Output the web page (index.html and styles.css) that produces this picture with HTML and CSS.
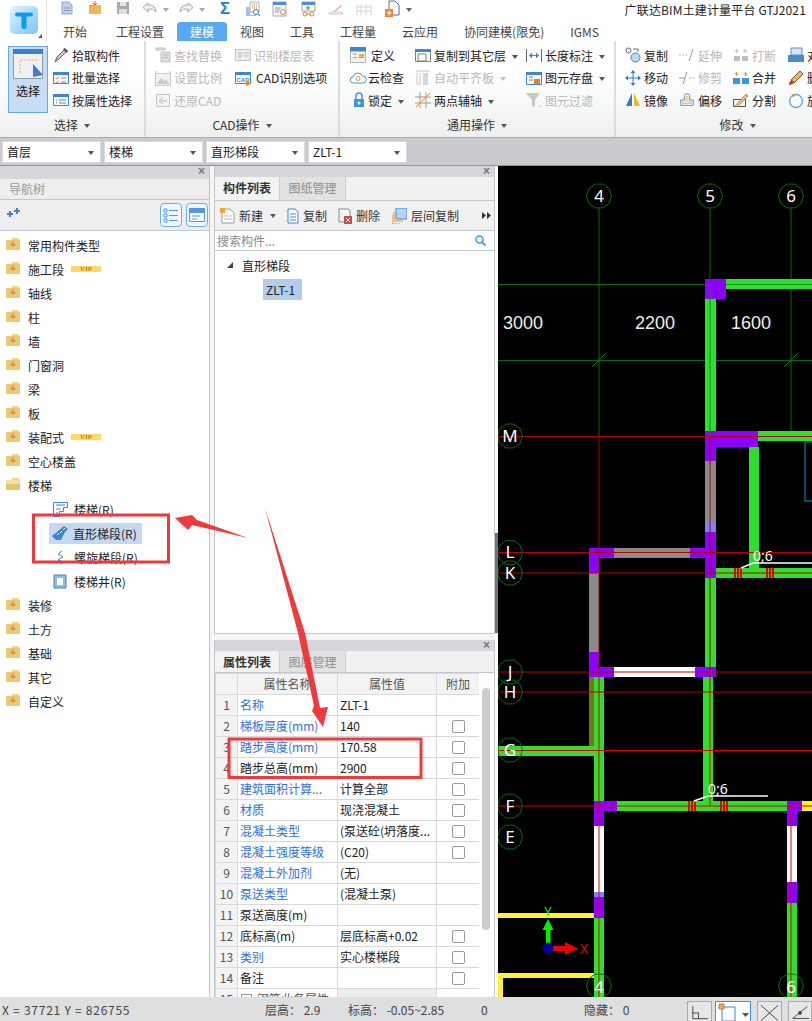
FILE: index.html
```html
<!DOCTYPE html>
<html lang="zh">
<head>
<meta charset="utf-8">
<title>广联达BIM土建计量平台 GTJ2021</title>
<link rel="stylesheet" href="styles.css">
</head>
<body>
<div class="app">

<header class="top">
  <div class="logo">
    <div class="logo-tile"><svg viewBox="0 0 28 28" width="28" height="28"><path d="M5 8.500q0-2 2-2h14q2 0 2 2t-2 2h-4.500v10q0 2.500-2.500 2.500t-2.500-2.500v-10H7q-2 0-2-2z" fill="#0a9bf0"/></svg></div>
    <span class="logo-corner"></span>
  </div>
  <div class="top-main">
    <div class="quick">
      <svg class="q q-new" viewBox="0 0 14 14" width="14" height="14"><path d="M2 1h7l3 3v9H2z" fill="#c3d0e8" stroke="#8fa6cf"/><path d="M4 7h6M4 9.500h6" stroke="#7d95c4"/></svg>
      <svg class="q q-open" viewBox="0 0 14 14" width="14" height="14"><path d="M1 4h12v9H1z" fill="#f5b25e"/><path d="M7 0v4M5 2l2 2 2-2" stroke="#e05a1c" fill="none"/><path d="M1 4h4l1 1H1z" fill="#e99a3a"/></svg>
      <svg class="q q-save" viewBox="0 0 14 14" width="14" height="14"><path d="M1 1h12v12H1z" fill="#a9a9a9"/><path d="M4 1h6v4H4z" fill="#e6e6e6"/><path d="M3 8h8v5H3z" fill="#dedede"/></svg>
      <svg class="q q-undo" viewBox="0 0 16 14" width="16" height="14"><path d="M6 2L1 6.500 6 11V8q5-1 8 3 0-7-8-7z" fill="#f2f2f2" stroke="#a4a4a4"/></svg>
      <span class="q q-dd1"></span>
      <svg class="q q-redo" viewBox="0 0 16 14" width="16" height="14"><path d="M10 2l5 4.500L10 11V8q-5-1-8 3 0-7 8-7z" fill="#f2f2f2" stroke="#a4a4a4"/></svg>
      <span class="q q-dd2"></span>
      <span class="q q-sum">Σ</span>
      <svg class="q q-a" viewBox="0 0 16 16" width="16" height="16"><path d="M5 1h9v10H5z" fill="#fff" stroke="#9db5d6"/><path d="M7 3h5M7 5h5M7 7h5" stroke="#d9893a" stroke-dasharray="1 1"/><path d="M1 6h4v8h6v1H1z" fill="#9cc3ea"/><circle cx="11" cy="11" r="2.500" fill="#fff" stroke="#2c78c8"/><path d="M13 13l2 2" stroke="#2c78c8"/></svg>
      <svg class="q q-b" viewBox="0 0 16 16" width="16" height="16"><path d="M1 1h13v14H1z" fill="#f7f7f7" stroke="#a9a9a9"/><path d="M1 1h13v3H1z" fill="#4a8fd8"/><path d="M3 7h6M3 9h5M3 11h4" stroke="#999"/><circle cx="11" cy="11" r="2.500" fill="#fff" stroke="#d68a2e"/></svg>
      <svg class="q q-c" viewBox="0 0 16 16" width="16" height="16"><path d="M1 1h13v9H1z" fill="#f7f7f7" stroke="#a9a9a9"/><path d="M1 1h13v3H1z" fill="#4a8fd8"/><path d="M7 5v4M5 7h4" stroke="#4d8f3c"/><circle cx="4" cy="13" r="2" fill="none" stroke="#d68a2e"/><circle cx="11" cy="13" r="2" fill="none" stroke="#d68a2e"/><path d="M6 13h3" stroke="#d68a2e"/></svg>
      <svg class="q q-d" viewBox="0 0 16 14" width="16" height="14"><path d="M1 11q5-3 14 0v1H1z" fill="#ededed" stroke="#cfcfcf"/><path d="M6 9l7-6 1 1-7 6z" fill="#e9a98d"/></svg>
      <svg class="q q-e" viewBox="0 0 16 14" width="16" height="14"><path d="M1 2v11M5 2v11M10 2v11M15 2v11M1 5h14M1 9h14" stroke="#d4d4d4"/></svg>
      <svg class="q q-f" viewBox="0 0 16 18" width="16" height="18"><path d="M5 1h6l4 4v10H5z" fill="#fff" stroke="#5c6f86"/><path d="M1 9h8v8H1z" fill="#e8892f"/><path d="M5 10.500v5M2.500 13h5" stroke="#fff"/></svg>
      <span class="q q-more"></span>
      <span class="app-title">广联达BIM土建计量平台 GTJ2021</span>
    </div>
    <nav class="tabs">
      <span class="tab tab-first">开始</span>
      <span class="tab">工程设置</span>
      <span class="tab tab-on">建模</span>
      <span class="tab">视图</span>
      <span class="tab">工具</span>
      <span class="tab">工程量</span>
      <span class="tab">云应用</span>
      <span class="tab">协同建模(限免)</span>
      <span class="tab">IGMS</span>
    </nav>
  </div>
</header>

<section class="ribbon">
  <div class="group g1">
    <div class="rows">
      <div class="big">
        <svg viewBox="0 0 30 30" width="30" height="30"><path d="M.5.500h29v29H.5z" fill="#eef2f8" stroke="#8a9bb5"/><path d="M0 0h30v5H0z" fill="#3f7fc8"/><path d="M7 24V11h19" fill="none" stroke="#f5a623" stroke-dasharray="2 1.500"/><path d="M20 15v13l10-2z" fill="#3f7fc8"/></svg>
        <span>选择</span>
      </div>
      <div class="it">
        <svg class="ic" viewBox="0 0 16 16"><path d="M2 15l2-5 7-7 2 2-7 7z" fill="#c8c8c8" stroke="#666"/><path d="M10 2l2-1 3 3-1 2z" fill="#555"/><path d="M2 15l2-4 1 1z" fill="#d97b2a"/></svg>
        <span>拾取构件</span>
      </div>
      <div class="it it-r2">
        <svg class="ic" viewBox="0 0 16 16"><path d="M.5 2.500h15v11H.5z" fill="#fff" stroke="#3f86d0"/><path d="M0 2h16v3H0z" fill="#3f86d0"/><path d="M3 8l1 1 2-2M3 12l1 1 2-2" stroke="#ee8a22" fill="none"/><path d="M8 8h5M8 12h5" stroke="#888"/></svg>
        <span>批量选择</span>
      </div>
      <div class="it it-r3">
        <svg class="ic" viewBox="0 0 16 16"><path d="M.5 2.500h15v11H.5z" fill="#fff" stroke="#3f86d0"/><path d="M0 2h16v3H0z" fill="#3f86d0"/><path d="M3 8h1M3 11h1M6 8h7M6 11h7" stroke="#3f86d0"/></svg>
        <span>按属性选择</span>
      </div>
    </div>
    <div class="glabel">选择<i class="dd"></i></div>
  </div>

  <div class="group g2">
    <div class="rows">
      <div class="it off">
        <svg class="ic" viewBox="0 0 16 16"><path d="M1 1h9v2H1zM6 5h9v10H6z" fill="#ddd" stroke="#c2c2c2"/><path d="M8 8h5M8 10.500h5" stroke="#bbb"/></svg>
        <span>查找替换</span>
      </div>
      <div class="it off">
        <svg class="ic" viewBox="0 0 16 16"><path d="M.5 2.500h15v11H.5z" fill="#eee" stroke="#c4c4c4"/><path d="M3 5h4v6H3z" fill="#d4d4d4"/><path d="M9 6h5M9 9h5" stroke="#bbb"/></svg>
        <span>识别楼层表</span>
      </div>
      <div class="it off">
        <svg class="ic" viewBox="0 0 16 16"><path d="M.5 3.500h15v12H.5z" fill="#f1f1f1" stroke="#ccc"/><path d="M2 14l4-6 3 3 2-2 3 5z" fill="#ccc"/><path d="M1 1v3M15 1v3" stroke="#bbb"/></svg>
        <span>设置比例</span>
      </div>
      <div class="it it-cad">
        <svg class="ic" viewBox="0 0 16 16"><path d="M.5 2.500h15v11H.5z" fill="#fff" stroke="#3f86d0"/><path d="M0 2h16v3H0z" fill="#3f86d0"/><text x="8" y="12" class="ic-cad">CAD</text><path d="M11 9v7l5-2z" fill="#ee8a22"/></svg>
        <span>CAD识别选项</span>
      </div>
      <div class="it off">
        <svg class="ic" viewBox="0 0 16 16"><path d="M1.500 2.500h13v12h-13z" fill="#f4f4f4" stroke="#c4c4c4"/><path d="M8 5L4 9l4 3M4 9h8" stroke="#bdbdbd" fill="none"/></svg>
        <span>还原CAD</span>
      </div>
    </div>
    <div class="glabel">CAD操作<i class="dd"></i></div>
  </div>

  <div class="group g3">
    <div class="rows">
      <div class="it it-wide">
        <svg class="ic ic-l" viewBox="0 0 18 18"><path d="M.5 .500h17v17H.5z" fill="#f3f3f3" stroke="#aaa"/><path d="M0 0h18v5H0z" fill="#3f86d0"/><path d="M3 8h5M3 12h5" stroke="#999"/><path d="M10 8h6v3h-6z" fill="#f4a42c"/><path d="M10 12h6" stroke="#999"/></svg>
        <span>定义</span>
      </div>
      <div class="it">
        <svg class="ic" viewBox="0 0 16 16"><path d="M.5 2.500h15v12H.5z" fill="#fff" stroke="#7a7f85"/><path d="M0 2h16v3H0z" fill="#3f86d0"/><path d="M3 7h8v7H3z" fill="#fff" stroke="#7a7f85"/></svg>
        <span>复制到其它层<i class="dd"></i></span>
      </div>
      <div class="it">
        <svg class="ic" viewBox="0 0 16 16"><path d="M.5 2v13M15.500 2v13" stroke="#666"/><path d="M3 8.500h10" stroke="#3f86d0"/><path d="M3 8.500l3-3v6zM13 8.500l-3-3v6z" fill="#3f86d0"/></svg>
        <span>长度标注<i class="dd"></i></span>
      </div>
      <div class="it it-c1">
        <svg class="ic ic-l" viewBox="0 0 18 16"><path d="M4.500 13a3 3 0 0 1-.5-6 5 5 0 0 1 9.500-1A3.500 3.500 0 0 1 14 13z" fill="#fff" stroke="#3f96e0"/><circle cx="9" cy="8.500" r="2" fill="none" stroke="#ee8a22"/></svg>
        <span>云检查</span>
      </div>
      <div class="it off">
        <svg class="ic" viewBox="0 0 16 16"><path d="M1 1h14M2 3v11M5 3v11M2 14h3" stroke="#c4c4c4" fill="none"/><path d="M8 3h5v12H8z" fill="#d6d6d6"/></svg>
        <span>自动平齐板<i class="dd dd-off"></i></span>
      </div>
      <div class="it">
        <svg class="ic" viewBox="0 0 16 16"><path d="M.5 2.500h15v12H.5z" fill="#fff" stroke="#3f86d0"/><path d="M0 2h16v3H0z" fill="#3f86d0"/><path d="M3 7h4M3 10h4" stroke="#777"/><path d="M8 9h6v5H8z" fill="#ee7d1f"/></svg>
        <span>图元存盘<i class="dd"></i></span>
      </div>
      <div class="it it-c1">
        <svg class="ic ic-lock" viewBox="0 0 12 16"><path d="M3 7V4a3 3 0 0 1 6 0v3" fill="none" stroke="#3f96e0" stroke-width="1.500"/><path d="M1 7h10v8H1z" fill="#3f96e0"/><circle cx="6" cy="11" r="1.500" fill="#fff"/></svg>
        <span>锁定<i class="dd"></i></span>
      </div>
      <div class="it">
        <svg class="ic" viewBox="0 0 16 16"><path d="M5 0v16M11 0v16M0 5h16M0 11h16" stroke="#888" stroke-width=".8"/><path d="M1 15L15 1" stroke="#ee8a22"/></svg>
        <span>两点辅轴<i class="dd"></i></span>
      </div>
      <div class="it off">
        <svg class="ic" viewBox="0 0 16 16"><path d="M0 1h14L9 8v7l-3-1V8z" fill="#c8c8c8"/><path d="M12 14h3" stroke="#c8c8c8"/></svg>
        <span>图元过滤</span>
      </div>
    </div>
    <div class="glabel">通用操作<i class="dd"></i></div>
  </div>

  <div class="group g4">
    <div class="rows">
      <div class="it">
        <svg class="ic" viewBox="0 0 16 16"><circle cx="3.500" cy="3.500" r="2.500" fill="#fff" stroke="#666"/><circle cx="10.500" cy="10.500" r="4.500" fill="#bcd7f2" stroke="#3f86d0"/><path d="M8 2h5v3" fill="none" stroke="#666"/></svg>
        <span>复制</span>
      </div>
      <div class="it off">
        <svg class="ic" viewBox="0 0 16 16"><path d="M0 8h9" stroke="#bbb" stroke-dasharray="2 1"/><path d="M10 14l4-12" stroke="#999"/></svg>
        <span>延伸</span>
      </div>
      <div class="it off">
        <svg class="ic" viewBox="0 0 16 16"><path d="M1 9h6v5H1zM9 9h6v5H9z" fill="#bdbdbd"/><path d="M3.500 2v4M1.500 4h4M12 2v4M10 4h4" stroke="#bdbdbd"/></svg>
        <span>打断</span>
      </div>
      <div class="it it-clip">
        <svg class="ic" viewBox="0 0 16 16"><path d="M3 1h11v7H3z" fill="#d7e4f4" stroke="#5d90c8"/><path d="M0 8h16v7H0z" fill="#4a8ad0"/></svg>
        <span>对齐</span>
      </div>
      <div class="it">
        <svg class="ic" viewBox="0 0 16 16"><path d="M8 0l2.500 3h-5zM8 16l2.500-3h-5zM0 8l3-2.500v5zM16 8l-3-2.500v5z" fill="#2a7cd0"/><path d="M8 3v10M3 8h10" stroke="#2a7cd0"/></svg>
        <span>移动</span>
      </div>
      <div class="it off">
        <svg class="ic" viewBox="0 0 16 16"><path d="M0 8h6" stroke="#999"/><path d="M10 8h6" stroke="#bbb" stroke-dasharray="2 1"/><path d="M4 14l4-12" stroke="#999"/></svg>
        <span>修剪</span>
      </div>
      <div class="it">
        <svg class="ic" viewBox="0 0 16 16"><path d="M0 8h7v6H0zM9 8h7v6H9z" fill="#3f96e0"/><path d="M3.500 2v4M1.500 4h4M12.500 2v4M10.500 4h4" stroke="#ee8a22"/></svg>
        <span>合并</span>
      </div>
      <div class="it it-clip">
        <svg class="ic" viewBox="0 0 16 16"><path d="M3 10l9-9 3 3-9 9z" fill="#e4b57a" stroke="#7a5a2a"/><path d="M1 15q0-4 3-5l2 2q-1 3-5 3z" fill="#b0451f"/></svg>
        <span>删除</span>
      </div>
      <div class="it">
        <svg class="ic" viewBox="0 0 16 16"><path d="M7 1v13H1z" fill="#2a7cd0"/><path d="M9 1v13h6z" fill="#f5b02e"/></svg>
        <span>镜像</span>
      </div>
      <div class="it">
        <svg class="ic" viewBox="0 0 18 16"><path d="M2 14V8h4V3q0-2 3-2t3 2v5h4v6z" fill="#fff" stroke="#3f86d0"/><path d="M4 12V10h4V4h2v6h4v2z" fill="none" stroke="#f5b02e"/></svg>
        <span>偏移</span>
      </div>
      <div class="it">
        <svg class="ic" viewBox="0 0 16 16"><path d="M.5 7.500h12v7H.5z" fill="none" stroke="#555"/><path d="M2 14L13 2l2 2L4 15z" fill="#f0c27a" stroke="#7a5a2a" stroke-width=".6"/></svg>
        <span>分割</span>
      </div>
      <div class="it it-clip">
        <svg class="ic" viewBox="0 0 16 16"><circle cx="8" cy="9" r="6.500" fill="none" stroke="#5aa6e6" stroke-width="1.300"/><path d="M4 2l4 .500-3 3z" fill="#ee8a22"/></svg>
        <span>旋转</span>
      </div>
    </div>
    <div class="glabel">修改<i class="dd"></i></div>
  </div>
</section>

<section class="selbar">
  <div class="sel">首层</div>
  <div class="sel">楼梯</div>
  <div class="sel">直形梯段</div>
  <div class="sel">ZLT-1</div>
</section>

<main class="main">
  <aside class="nav">
    <div class="grip"><span>×</span></div>
    <div class="nav-title">导航树</div>
    <div class="nav-tools">
      <svg class="spark" viewBox="0 0 13 10" width="13" height="10"><path d="M0 6h6M3 3v6" stroke="#3f86d0" stroke-width="2"/><path d="M7 3h6M10 0v6" stroke="#3f86d0" stroke-width="2"/></svg>
      <span class="tbtn"><svg viewBox="0 0 16 16" width="16" height="16"><path d="M1 2h3v3H1zM1 7h3v3H1zM1 12h3v3H1z" fill="none" stroke="#4a9be8"/><path d="M6 3.500h9M6 8.500h9M6 13.500h9" stroke="#4a9be8"/></svg></span>
      <span class="tbtn"><svg viewBox="0 0 16 16" width="16" height="16"><path d="M.5 1.500h15v13H.5z" fill="#fff" stroke="#4a9be8"/><path d="M0 1h16v5H0z" fill="#4a9be8"/><path d="M3 9h8M3 12h5" stroke="#4a9be8"/></svg></span>
    </div>
    <ul class="tree">
      <li><i class="fold"></i>常用构件类型</li>
      <li><i class="fold"></i>施工段<b class="vip">VIP</b></li>
      <li><i class="fold"></i>轴线</li>
      <li><i class="fold"></i>柱</li>
      <li><i class="fold"></i>墙</li>
      <li><i class="fold"></i>门窗洞</li>
      <li><i class="fold"></i>梁</li>
      <li><i class="fold"></i>板</li>
      <li><i class="fold"></i>装配式<b class="vip">VIP</b></li>
      <li><i class="fold"></i>空心楼盖</li>
      <li><i class="fold fold-open"></i>楼梯</li>
      <li class="sub"><svg viewBox="0 0 15 15" width="15" height="15"><path d="M.5 .500h14v5h-4v4h-4v5h-6z" fill="#fff" stroke="#3f86d0"/><path d="M3 3h9M3 7h5M3 11h2" stroke="#3f86d0"/></svg>楼梯(R)</li>
      <li class="sub sub-on"><span class="sub-hl"><svg viewBox="0 0 18 16" width="18" height="16"><path d="M1 11L13 1l4 3-3 3-4 8H5z" fill="#3f86d0"/><path d="M6 10l2-2M9 8l2-2M12 5l2-2" stroke="#fff"/></svg>直形梯段(R)</span></li>
      <li class="sub"><svg viewBox="0 0 15 15" width="15" height="15"><path d="M9 1L5 4l5 3-5 3 5 2-3 2" fill="none" stroke="#3f86d0"/></svg>螺旋梯段(R)</li>
      <li class="sub"><svg viewBox="0 0 15 15" width="15" height="15"><path d="M1 1h12v13H1z" fill="#8fbce8" stroke="#3f86d0"/><path d="M4 4h6v7H4z" fill="#fff"/></svg>楼梯井(R)</li>
      <li><i class="fold"></i>装修</li>
      <li><i class="fold"></i>土方</li>
      <li><i class="fold"></i>基础</li>
      <li><i class="fold"></i>其它</li>
      <li><i class="fold"></i>自定义</li>
    </ul>
  </aside>

  <div class="mid">
    <section class="panel panel-list">
      <div class="grip grip-s"><span>×</span></div>
      <div class="ptabs"><span class="ptab ptab-on">构件列表</span><span class="ptab">图纸管理</span></div>
      <div class="ptools">
        <span class="pt pt-new"><svg viewBox="0 0 15 16" width="15" height="16"><path d="M2 1h8l4 4v10H2z" fill="#fff" stroke="#999"/><path d="M0 0h5v5H0z" fill="#f4a42c"/><path d="M4 8h8M4 11h8" stroke="#bbb"/></svg>新建<i class="dd"></i></span>
        <span class="pt pt-copy"><svg viewBox="0 0 14 16" width="14" height="16"><path d="M3 1h7l3 3v11H3z" fill="#fff" stroke="#3f86d0"/><path d="M5 6h6M5 9h6M5 12h6" stroke="#3f86d0"/></svg>复制</span>
        <span class="pt pt-del"><svg viewBox="0 0 14 16" width="14" height="16"><path d="M1 1h9l2 2v6" fill="#fff" stroke="#888"/><path d="M1 1v13h6" fill="none" stroke="#888"/><path d="M6 8h8v8H6z" fill="#cc4a4a"/><path d="M8 10l4 4M12 10l-4 4" stroke="#fff"/></svg>删除</span>
        <span class="pt pt-floor"><svg viewBox="0 0 15 16" width="15" height="16"><path d="M4 0h11v11H4z" fill="#b8d3f2" stroke="#3f86d0"/><path d="M2 4v9h9M0 7v9h8" fill="none" stroke="#ee8a22"/></svg>层间复制</span>
        <svg class="pt-more" viewBox="0 0 9 7" width="9" height="7"><path d="M0 0l4 3.500L0 7zM5 0l4 3.500L5 7z" fill="#333"/></svg>
      </div>
      <div class="psearch"><span>搜索构件...</span>
        <svg viewBox="0 0 11 11" width="11" height="11"><circle cx="4.500" cy="4.500" r="3.500" fill="none" stroke="#3f9ae0" stroke-width="1.500"/><path d="M7 7l3.500 3.500" stroke="#3f9ae0" stroke-width="1.800"/></svg>
      </div>
      <div class="plist">
        <div class="pnode"><i class="tri"></i>直形梯段</div>
        <div class="pleaf"><span>ZLT-1</span></div>
      </div>
    </section>

    <section class="panel panel-attr">
      <div class="grip grip-s"><span>×</span></div>
      <div class="ptabs ptabs-s"><span class="ptab ptab-on">属性列表</span><span class="ptab">图层管理</span></div>
      <div class="attr">
        <table class="tbl">
          <thead><tr><th class="c0"></th><th class="c1">属性名称</th><th class="c2">属性值</th><th class="c3">附加</th></tr></thead>
          <tbody>
            <tr><td class="n">1</td><td class="b">名称</td><td>ZLT-1</td><td></td></tr>
            <tr><td class="n">2</td><td class="b">梯板厚度(mm)</td><td>140</td><td class="ck"><i></i></td></tr>
            <tr><td class="n">3</td><td class="b">踏步高度(mm)</td><td>170.58</td><td class="ck"><i></i></td></tr>
            <tr><td class="n">4</td><td>踏步总高(mm)</td><td>2900</td><td class="ck"><i></i></td></tr>
            <tr><td class="n">5</td><td class="b">建筑面积计算...</td><td>计算全部</td><td class="ck"><i></i></td></tr>
            <tr><td class="n">6</td><td class="b">材质</td><td>现浇混凝土</td><td class="ck"><i></i></td></tr>
            <tr><td class="n">7</td><td class="b">混凝土类型</td><td>(泵送砼(坍落度...</td><td class="ck"><i></i></td></tr>
            <tr><td class="n">8</td><td class="b">混凝土强度等级</td><td>(C20)</td><td class="ck"><i></i></td></tr>
            <tr><td class="n">9</td><td class="b">混凝土外加剂</td><td>(无)</td><td></td></tr>
            <tr><td class="n">10</td><td class="b">泵送类型</td><td>(混凝土泵)</td><td></td></tr>
            <tr><td class="n">11</td><td>泵送高度(m)</td><td></td><td></td></tr>
            <tr><td class="n">12</td><td>底标高(m)</td><td>层底标高+0.02</td><td class="ck"><i></i></td></tr>
            <tr><td class="n">13</td><td class="b">类别</td><td>实心楼梯段</td><td class="ck"><i></i></td></tr>
            <tr><td class="n">14</td><td>备注</td><td></td><td class="ck"><i></i></td></tr>
            <tr><td class="n">15</td><td class="expand"><i class="plus"></i>钢筋业务属性</td><td class="shade"></td><td></td></tr>
          </tbody>
        </table>
        <div class="vbar"><span></span></div>
      </div>
    </section>
  </div>

  <div class="splitter"><span></span></div>

  <div class="cad">
    <svg class="cad-svg" viewBox="498 166 314 831" width="314" height="831">
      <defs>
        <polygon id="bub" points="3.900,-11.900 10.100,-7.300 12.500,0 10.100,7.300 3.900,11.900 -3.900,11.900 -10.100,7.300 -12.500,0 -10.100,-7.300 -3.900,-11.900"/>
      </defs>
      <!-- dark green grid -->
      <g class="axis">
        <path d="M599 208V436M710 208V436M791 208V436M498 284.500H812M498 360.500H812"/>
        <path d="M592 367l14-14M703 367l14-14M784 367l14-14"/>
        <path d="M791 431v10"/>
      </g>
      <!-- walls -->
      <g class="w-green">
        <rect x="726" y="279" width="86" height="10"/>
        <rect x="705" y="299" width="11" height="132"/>
        <rect x="758" y="431" width="54" height="10"/>
        <rect x="749" y="447" width="10" height="121"/>
        <rect x="716" y="568" width="96" height="10"/>
        <rect x="705" y="578" width="11" height="89"/>
        <rect x="703" y="677" width="10" height="124"/>
        <rect x="594" y="677" width="10" height="124"/>
        <rect x="498" y="746" width="96" height="10"/>
        <rect x="617" y="801" width="170" height="10"/>
        <rect x="594" y="918" width="10" height="79"/>
        <rect x="787" y="903" width="10" height="94"/>
      </g>
      <g class="w-olive"><rect x="589" y="677" width="5" height="69"/></g>
      <g class="w-purple">
        <rect x="705" y="279" width="21" height="20"/>
        <rect x="705" y="431" width="53" height="16"/>
        <rect x="705" y="447" width="11" height="14"/>
        <rect x="705" y="532" width="11" height="46"/>
        <rect x="589" y="548" width="25" height="10"/>
        <rect x="690" y="548" width="26" height="10"/>
        <rect x="589" y="558" width="10" height="15"/>
        <rect x="589" y="652" width="10" height="25"/>
        <rect x="589" y="667" width="25" height="10"/>
        <rect x="695" y="667" width="21" height="10"/>
        <rect x="594" y="801" width="23" height="10"/>
        <rect x="594" y="811" width="10" height="15"/>
        <rect x="594" y="897" width="10" height="21"/>
        <rect x="787" y="801" width="15" height="10"/>
        <rect x="787" y="811" width="10" height="15"/>
        <rect x="787" y="882" width="10" height="21"/>
      </g>
      <g class="w-gray">
        <rect x="705" y="461" width="11" height="61"/>
        <rect x="614" y="548" width="76" height="10"/>
        <rect x="589" y="573" width="10" height="79"/>
      </g>
      <g class="w-lilac">
        <rect x="705" y="522" width="11" height="10"/>
        <rect x="594" y="892" width="10" height="5"/>
      </g>
      <g class="w-white">
        <rect x="614" y="667" width="81" height="10"/>
        <rect x="594" y="826" width="10" height="66"/>
        <rect x="787" y="826" width="10" height="56"/>
      </g>
      <g class="w-yellow">
        <rect x="802" y="801" width="10" height="10"/>
        <rect x="498" y="913" width="96" height="5"/>
        <rect x="498" y="973" width="96" height="5"/>
        <rect x="498" y="973" width="5" height="24"/>
      </g>
      <path class="teal" d="M812 501H805V442H812"/>
      <!-- green core lines in walls -->
      <path class="inner" d="M710 289V436M726 284.500H812"/>
      <!-- rebar marks -->
      <g class="rebar">
        <path d="M735 568v10M738 568v10M741 568v10M767 568v10M770 568v10M773 568v10"/>
        <path d="M689 801v10M692 801v10M695 801v10M721 801v10M724 801v10M727 801v10"/>
      </g>
      <!-- red axes -->
      <g class="red">
        <path d="M498 436.500H812M498 552.500H812M498 573H812M498 672H812M498 692H812"/>
        <path d="M599 436V697M710 436V692"/>
      </g>
      <g class="red-bright">
        <path d="M498 750.500H812M498 806H812M599 697V997M710 692V805M791 806V997"/>
      </g>
      <!-- leaders -->
      <path class="leader" d="M741 568L753 563H812M694 801L708 796H768"/>
      <text class="lbl" x="753" y="561">0;6</text>
      <text class="lbl" x="708" y="794">0;6</text>
      <!-- bubbles -->
      <g class="bubble">
        <use href="#bub" x="599" y="196"/><use href="#bub" x="710" y="196"/><use href="#bub" x="791" y="196"/>
        <use href="#bub" x="510" y="436"/><use href="#bub" x="510" y="552.500"/><use href="#bub" x="510" y="573"/>
        <use href="#bub" x="510" y="672"/><use href="#bub" x="510" y="692"/><use href="#bub" x="510" y="750"/>
        <use href="#bub" x="510" y="806"/><use href="#bub" x="510" y="837"/>
        <use href="#bub" x="599" y="986"/><use href="#bub" x="791" y="986"/>
      </g>
      <g class="axl">
        <text x="599" y="202">4</text><text x="710" y="202">5</text><text x="791" y="202">6</text>
        <text x="510" y="442">M</text><text x="510" y="558">L</text><text x="510" y="579">K</text>
        <text x="510" y="678">J</text><text x="510" y="698">H</text><text x="510" y="756">G</text>
        <text x="510" y="812">F</text><text x="510" y="843">E</text>
        <text x="599" y="993">4</text><text x="791" y="993">6</text>
      </g>
      <g class="dim"><text x="503" y="329">3000</text><text x="635" y="329">2200</text><text x="731" y="329">1600</text></g>
      <!-- coordinate arrows -->
      <path class="g-arrow" d="M546 943V930H542.500L548 919 553.500 930H550.500V943Z"/>
      <path class="r-arrow" d="M552 946H565V942L578 948.500 565 955V951H552Z"/>
      <circle cx="548" cy="948" r="5.500" class="o-dot"/>
      <text class="ay" x="548" y="916">Y</text>
      <text class="ax" x="584" y="954">X</text>
    </svg>
  </div>
</main>

<footer class="status">
  <span class="s-xy">X = 37721 Y = 826755</span>
  <span class="s-floor">层高： 2.9</span>
  <span class="s-elev">标高： -0.05~2.85</span>
  <span class="s-zero">0</span>
  <span class="s-hide">隐藏： 0</span>
  <span class="s-btn s-b1"><svg viewBox="0 0 24 20" width="24" height="20"><path d="M5 4v13h16M5 11h6v6" fill="none" stroke="#444"/></svg></span>
  <span class="s-btn s-b2"><svg viewBox="0 0 34 20" width="34" height="20"><path d="M6 5h13v14H6z" fill="none" stroke="#3f86d0"/><path d="M3 2h5v5H3z" fill="#f4a460" stroke="#d97b2a"/><path d="M26 11h7l-3.500 4z" fill="#555"/></svg></span>
  <span class="s-btn s-b3"><svg viewBox="0 0 24 20" width="24" height="20"><path d="M3 3l18 16M21 3L3 19" stroke="#444" fill="none"/></svg></span>
  <span class="s-btn s-b4"><svg viewBox="0 0 24 20" width="24" height="20"><path d="M4 17h18M4 17L20 4" stroke="#444" fill="none"/><circle cx="12" cy="11" r="2" fill="#444"/></svg></span>
</footer>

<svg class="notes" viewBox="0 0 812 1021" width="812" height="1021">
  <rect class="note-box" x="33.500" y="515" width="135" height="47"/>
  <rect class="note-box" x="229" y="739" width="192" height="38.500"/>
  <path class="note-arrow" d="M175 518L192 515 197 520 248 538 192 525 188 530Z"/>
  <path class="note-arrow" d="M265 508L305 633 320 708 328 707 323 727 312 711 314 706 298 633Z"/>
</svg>

</div>
</body>
</html>
```

FILE: styles.css
```css
* { box-sizing: border-box; }
html, body { margin: 0; padding: 0; }
body {
  font-family: "Noto Sans CJK SC", "Noto Sans", "Liberation Sans", sans-serif;
  font-size: 12px;
  color: #222;
  background: #fff;
}
.app {
  position: relative;
  width: 812px;
  height: 1021px;
  overflow: hidden;
  display: flex;
  flex-direction: column;
}

/* title strip */
.top { display: flex; height: 41px; flex: none; background: #fff; }
.logo { position: relative; width: 47px; flex: none; border-right: 1px solid #e2e2e2; padding: 6px 0 0 10px; }
.logo-tile { width: 28px; height: 28px; border-radius: 5px; background: linear-gradient(135deg, #e6f4fe, #9ad4fb 65%, #7cc4fa); }
.logo-corner { position: absolute; right: 4px; top: 34px; border-left: 4px solid transparent; border-bottom: 4px solid #555; }
.top-main { flex: 1; min-width: 0; }
.quick { position: relative; height: 22px; display: flex; align-items: center; }
.q { position: absolute; top: 1px; }
.q-new { left: 13px; }
.q-open { left: 41px; }
.q-save { left: 69px; }
.q-undo { left: 95px; }
.q-dd1, .q-dd2, .q-more { width: 0; height: 0; top: 8px; border: 3px solid transparent; border-top: 4px solid #aaa; }
.q-dd1 { left: 116px; }
.q-redo { left: 131px; }
.q-dd2 { left: 152px; }
.q-sum { left: 173px; top: 0; font: bold 17px/17px "Liberation Sans", sans-serif; color: #2a7cd0; }
.q-a { left: 198px; }
.q-b { left: 225px; }
.q-c { left: 254px; }
.q-d { left: 281px; top: 2px; }
.q-e { left: 309px; top: 2px; }
.q-f { left: 337px; top: 0; }
.q-more { left: 359px; border-top-color: #666; }
.app-title { position: absolute; right: 6px; top: 0; font-size: 12px; letter-spacing: .15px; line-height: 20px; color: #222; white-space: nowrap; }
.tabs { display: flex; height: 19px; padding-left: 3px; line-height: 20px; color: #444; }
.tab { padding: 0 13px; white-space: nowrap; }
.tab-first { margin-right: 3px; }
.tab-on { background: #5aa9f0; color: #fff; border-radius: 4px 4px 0 0; }

/* ribbon */
.ribbon {
  display: flex;
  height: 97px;
  flex: none;
  background: linear-gradient(#fff, #fff 35%, #eef0f0);
  border-bottom: 1px solid #a9adb1;
}
.group { display: flex; flex-direction: column; border-right: 2px solid #dadcdd; padding-top: 3px; }
.g1 { width: 146px; padding-left: 8px; }
.g2 { width: 194px; padding-left: 9px; }
.g3 { width: 276px; padding-left: 9px; }
.g4 { width: 196px; padding-left: 9px; border-right: 0; overflow: hidden; }
.rows { display: grid; grid-auto-rows: 22.5px; height: 69px; }
.g1 .rows { grid-template-columns: 45px 1fr; }
.g2 .rows { grid-template-columns: 80px 1fr; }
.g3 .rows { grid-template-columns: 66px 111px 1fr; }
.g4 .rows { grid-template-columns: 54px 54px 55px 1fr; }
.it { display: flex; align-items: center; gap: 3px; white-space: nowrap; color: #222; }
.off { color: #b8b8b8; }
.ic { width: 16px; height: 16px; flex: none; }
.ic-l { width: 18px; }
.it-wide { gap: 4px; }
.it-c1 { gap: 1px; }
.it-cad { gap: 5px; }
.ic-lock { width: 12px; margin: 0 2px 0 4px; }
.ic-cad { font-size: 6px; font-weight: bold; fill: #3f86d0; text-anchor: middle; font-family: "Liberation Sans", sans-serif; }
.it-r2 { grid-column: 2; grid-row: 2; }
.it-r3 { grid-column: 2; grid-row: 3; }
.big {
  grid-row: 1 / span 3;
  width: 40px;
  height: 67px;
  margin-top: 2px;
  display: flex;
  flex-direction: column;
  align-items: center;
  padding-top: 2px;
  background: #c8dcf4;
  border: 1px solid #6aa7e6;
  color: #111;
}
.big span { margin-top: 4px; line-height: 16px; }
.dd { display: inline-block; margin-left: 6px; vertical-align: 2px; border: 3px solid transparent; border-top: 4px solid #555; border-bottom: 0; }
.dd-off { border-top-color: #c4c4c4; }
.glabel { height: 20px; margin-top: 2px; text-align: center; line-height: 20px; color: #333; padding-right: 9px; }
.g1 .glabel { padding-right: 8px; }
.g4 .glabel { padding-left: 38px; padding-right: 0; }

/* selector bar */
.selbar { display: flex; gap: 3px; height: 28px; flex: none; padding: 3px 0 0 2px; background: #c9cbce; border-bottom: 1px solid #8f959c; }
.sel { position: relative; width: 99px; height: 22px; padding-left: 4px; background: #fff; border: 1px solid #d7d9db; line-height: 20px; color: #222; }
.sel::after { content: ""; position: absolute; right: 6px; top: 9px; border: 3px solid transparent; border-top: 4px solid #555; border-bottom: 0; }

/* main area */
.main { display: flex; flex: 1; min-height: 0; background: #f6f6f6; }
.nav { width: 210px; flex: none; display: flex; flex-direction: column; background: #fff; border-right: 1px solid #bfc2c6; }
.grip { height: 12px; flex: none; position: relative; background: #d5d7db; }
.grip-s { height: 11px; }
.grip span { position: absolute; right: 4px; top: -4px; font: bold 12px/18px "Liberation Sans", sans-serif; color: #777; }
.nav-title { height: 22px; flex: none; padding-left: 9px; background: #eeeeee; border-bottom: 1px solid #c3c6ca; line-height: 20px; color: #999; border-top: 1px solid #d5d7db; }
.nav-tools { height: 31px; flex: none; display: flex; align-items: center; gap: 4px; padding-right: 1px; background: #eeeeee; border-bottom: 1px solid #c3c6ca; justify-content: flex-end; position: relative; }
.spark { margin: 0 auto 4px 7px; }
.tbtn { width: 22px; height: 24px; display: flex; align-items: center; justify-content: center; background: #f1f7fe; border: 1px solid #6ab0f0; border-radius: 4px; }
.tree { list-style: none; margin: 0; padding: 2px 0 0; flex: 1; overflow: hidden; }
.tree li { display: flex; align-items: center; height: 24px; padding-left: 6px; color: #222; white-space: nowrap; }
.fold { position: relative; width: 14px; height: 10px; margin-right: 8px; background: #eec877; border-radius: 1px; }
.fold::before { content: ""; position: absolute; left: 6px; top: -2px; width: 7px; height: 2px; background: #f1d595; }
.fold::after { content: "+"; position: absolute; left: 0; right: 0; top: -4px; text-align: center; font: bold 10px/18px "Liberation Sans", sans-serif; color: #c4923a; }
.fold-open { background: linear-gradient(#f4deaa 40%, #e9c26c 40%); }
.fold-open::after { content: ""; }
.vip { margin-left: 7px; width: 30px; height: 6px; background: #ffd966; color: #b8860b; font: bold 7px/6px "Liberation Serif", serif; text-align: center; }
.tree .sub { padding-left: 53px; gap: 6px; }
.tree .sub-on { padding-left: 49px; }
.sub-hl { display: flex; align-items: center; gap: 4px; width: 93px; height: 21px; padding-left: 2px; background: #c6d8f0; }

.mid { width: 281px; flex: none; margin-left: 4px; display: flex; flex-direction: column; gap: 6px; }
.panel { display: flex; flex-direction: column; background: #fff; border: 1px solid #c3c6ca; border-width: 0 1px; min-height: 0; }
.panel-list { height: 468px; flex: none; border-bottom: 1px solid #c3c6ca; }
.panel-attr { flex: 1; }
.ptabs { display: flex; height: 24px; flex: none; background: #f1f1f1; border-bottom: 1px solid #c3c6ca; }
.ptabs-s { height: 22px; }
.ptab { width: 66px; text-align: center; line-height: 21px; background: #e2e2e2; color: #9a9a9a; border-right: 1px solid #cfcfcf; font-weight: 500; }
.ptab-on { background: #f3f3f3; color: #333; font-weight: 700; border-right: 1px solid #cfcfcf; width: 65px; }
.ptools { display: flex; align-items: center; height: 30px; flex: none; padding-left: 5px; background: #f1f1f1; border-bottom: 1px solid #c3c6ca; color: #333; position: relative; }
.pt { display: flex; align-items: center; gap: 4px; white-space: nowrap; }
.pt-new { width: 65px; }
.pt-new .dd { margin-left: 3px; vertical-align: 0; }
.pt-copy { width: 53px; }
.pt-del { width: 54px; }
.pt-more { margin-left: 23px; }
.psearch { display: flex; justify-content: space-between; align-items: center; height: 20px; flex: none; padding: 0 8px 0 2px; border-bottom: 1px solid #c3c6ca; color: #8a8a8a; }
.plist { padding-top: 4px; flex: 1; }
.pnode { display: flex; align-items: center; height: 20px; padding-left: 12px; color: #222; }
.tri { width: 0; height: 0; margin-right: 9px; border-left: 6px solid transparent; border-bottom: 6px solid #444; }
.pleaf { padding: 4px 0 0 48px; }
.pleaf span { display: inline-block; width: 39px; height: 21px; padding-left: 3px; background: #b3cdec; line-height: 21px; color: #222; }

.attr { flex: 1; position: relative; overflow: hidden; min-height: 0; }
.tbl { position: relative; width: 264px; table-layout: fixed; border-collapse: collapse; background: #fff; }
.tbl th, .tbl td { height: 21px; padding: 0 0 0 2px; border: 1px solid #d9d9d9; font-weight: 400; white-space: nowrap; overflow: hidden; line-height: 18px; color: #222; text-align: left; }
.tbl th { text-align: center; color: #555; padding: 0; background: #f3f3f3; }
.tbl .c0 { width: 22px; }
.tbl .c1 { width: 100px; }
.tbl .c2 { width: 99px; }
.tbl .c3 { width: 43px; }
.tbl td.n { text-align: center; padding: 0; color: #555; background: #f3f3f3; }
.tbl td.b { color: #2f6fe0; }
.tbl td.ck { padding: 0; text-align: center; line-height: 0; }
.ck i { display: inline-block; width: 13px; height: 13px; border: 1px solid #999; border-radius: 2px; background: #fff; }
.tbl td.expand { padding-left: 3px; color: #555; }
.plus { display: inline-block; width: 11px; height: 11px; margin-right: 5px; border: 1px solid #999; vertical-align: -1px; }
.tbl td.shade { background: #ededed; }
.vbar { position: absolute; right: 0; top: 0; bottom: 0; width: 15px; background: #fff; }
.vbar span { position: absolute; left: 3px; top: 15px; width: 8px; height: 242px; border-radius: 4px; background: #cdcdcd; }

.splitter { width: 3px; flex: none; background: #fff; position: relative; }
.splitter span { position: absolute; left: 0; top: 367px; width: 3px; height: 100px; background: #6b7580; }
.cad { flex: 1; min-width: 0; background: #000; overflow: hidden; }
.cad-svg { display: block; }
.axis path { stroke: #0b6b0b; fill: none; stroke-width: 1; }
.w-green { fill: #2fdf2f; }
.w-olive { fill: #75751a; }
.w-purple { fill: #8b00ff; }
.w-gray { fill: #8a8a8a; }
.w-lilac { fill: #8080f0; }
.w-white { fill: #fff; }
.w-yellow { fill: #fff033; }
.teal { fill: none; stroke: #0a5f80; stroke-width: 1.500; }
.inner { stroke: #0b8f0b; fill: none; }
.rebar path { stroke: #f00000; stroke-width: 2; fill: none; }
.red path { stroke: #b80000; fill: none; }
.red-bright path { stroke: #e00000; fill: none; }
.leader { fill: none; stroke: #fff; stroke-width: 1.500; }
.lbl { fill: #fff; font: 14px "Noto Sans", sans-serif; }
.bubble use { fill: none; stroke: #0b6b0b; }
.axl text { fill: #fff; font: 17px "Noto Sans", sans-serif; text-anchor: middle; }
.dim text { fill: #eee; font: 18px "Liberation Sans", sans-serif; }
.g-arrow { fill: #00ee00; }
.r-arrow { fill: #f00000; }
.o-dot { fill: #0000a0; }
.ay { fill: #00ee00; font: 13px "Noto Sans", sans-serif; text-anchor: middle; }
.ax { fill: #f00000; font: 14px "Noto Sans", sans-serif; text-anchor: middle; }

/* status bar */
.status { position: relative; display: flex; align-items: center; height: 24px; flex: none; padding-left: 2px; background: #dedfe1; color: #444; white-space: nowrap; }
.s-xy { width: 263px; letter-spacing: .75px; }
.s-floor { width: 83px; }
.s-elev { width: 133px; }
.s-zero { width: 103px; }
.s-hide { width: 103px; }
.s-btn { display: flex; align-items: center; justify-content: center; height: 20px; margin-top: 4px; background: #e6e7e9; border: 1px solid #a8aaad; border-bottom: 0; }
.s-b1 { width: 25px; }
.s-b2 { width: 36px; margin-left: 3px; background: #fff; border-color: #3f96e0; }
.s-b3 { width: 25px; margin-left: 6px; }
.s-b4 { width: 24px; margin-left: 6px; }

/* hand-drawn annotations on the screenshot */
.notes { position: absolute; left: 0; top: 0; pointer-events: none; }
.note-box { fill: none; stroke: #ee3a3a; stroke-width: 3; }
.note-arrow { fill: #ee3a3a; }
```
